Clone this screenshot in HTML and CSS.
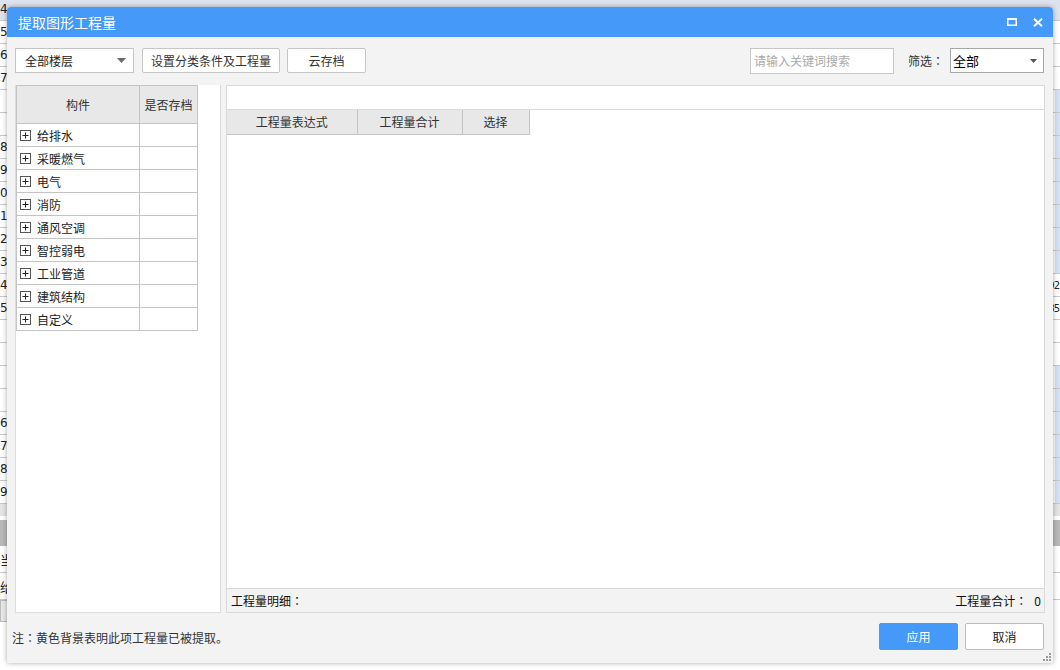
FILE: index.html
```html
<!DOCTYPE html>
<html lang="zh">
<head>
<meta charset="utf-8">
<title>提取图形工程量</title>
<link rel="stylesheet" href="styles.css">
</head>
<body>
<div class="sheet">
  <div class="srow top"><span class="num">4</span></div>
  <div class="srow"><span class="num">5</span></div>
  <div class="srow"><span class="num">6</span></div>
  <div class="srow"><span class="num">7</span></div>
  <div class="srow blue"><span class="num"></span></div>
  <div class="srow blue"><span class="num"></span></div>
  <div class="srow blue"><span class="num">8</span></div>
  <div class="srow blue"><span class="num">9</span></div>
  <div class="srow blue"><span class="num">0</span></div>
  <div class="srow blue"><span class="num">1</span></div>
  <div class="srow blue"><span class="num">2</span></div>
  <div class="srow blue"><span class="num">3</span></div>
  <div class="srow"><span class="num">4</span><span class="rt">92</span></div>
  <div class="srow"><span class="num">5</span><span class="rt">85</span></div>
  <div class="srow"><span class="num"></span></div>
  <div class="srow"><span class="num"></span></div>
  <div class="srow blue"><span class="num"></span></div>
  <div class="srow blue"><span class="num"></span></div>
  <div class="srow blue"><span class="num">6</span></div>
  <div class="srow blue"><span class="num">7</span></div>
  <div class="srow blue"><span class="num">8</span></div>
  <div class="srow blue"><span class="num">9</span></div>
  <div class="sgray"></div>
  <div class="srow tall"><span class="num">当</span></div>
  <div class="srow tall"><span class="num">给</span></div>
  <div class="sbox"></div>
</div>

<div class="dialog">
  <div class="titlebar">
    <span class="title">提取图形工程量</span>
    <div class="winbtns">
      <svg width="10" height="8" viewBox="0 0 10 8"><rect x="0.75" y="1" width="8.5" height="6.25" fill="none" stroke="#fff" stroke-width="1.5"/><rect x="0" y="0" width="10" height="2" fill="#fff"/></svg>
      <svg width="10" height="9" viewBox="0 0 10 9"><path d="M1 0.8L9 8.2M9 0.8L1 8.2" stroke="#fff" stroke-width="2"/></svg>
    </div>
  </div>

  <div class="toolbar">
    <div class="dropdown floor">
      <span>全部楼层</span>
      <svg class="caret" width="9" height="5" viewBox="0 0 9 5"><path d="M0 0h9L4.5 5z" fill="#6b6b6b"/></svg>
    </div>
    <button class="btn setup">设置分类条件及工程量</button>
    <button class="btn cloud">云存档</button>
    <div class="spacer"></div>
    <div class="search">请输入关键词搜索</div>
    <span class="filter-label">筛选<span class="p">：</span></span>
    <div class="dropdown filter">
      <span>全部</span>
      <svg class="caret small" width="7" height="4" viewBox="0 0 7 4"><path d="M0 0h7L3.5 4z" fill="#555"/></svg>
    </div>
  </div>

  <div class="main">
    <div class="leftpanel">
      <table class="tree">
        <colgroup><col class="c1"><col class="c2"></colgroup>
        <thead>
          <tr><th>构件</th><th>是否存档</th></tr>
        </thead>
        <tbody>
          <tr><td><span class="item"><svg class="plus" width="11" height="11" viewBox="0 0 11 11"><rect x="0.5" y="0.5" width="10" height="10" fill="#fff" stroke="#555"/><path d="M2.5 5.5h6M5.5 2.5v6" stroke="#222"/></svg>给排水</span></td><td></td></tr>
          <tr><td><span class="item"><svg class="plus" width="11" height="11" viewBox="0 0 11 11"><rect x="0.5" y="0.5" width="10" height="10" fill="#fff" stroke="#555"/><path d="M2.5 5.5h6M5.5 2.5v6" stroke="#222"/></svg>采暖燃气</span></td><td></td></tr>
          <tr><td><span class="item"><svg class="plus" width="11" height="11" viewBox="0 0 11 11"><rect x="0.5" y="0.5" width="10" height="10" fill="#fff" stroke="#555"/><path d="M2.5 5.5h6M5.5 2.5v6" stroke="#222"/></svg>电气</span></td><td></td></tr>
          <tr><td><span class="item"><svg class="plus" width="11" height="11" viewBox="0 0 11 11"><rect x="0.5" y="0.5" width="10" height="10" fill="#fff" stroke="#555"/><path d="M2.5 5.5h6M5.5 2.5v6" stroke="#222"/></svg>消防</span></td><td></td></tr>
          <tr><td><span class="item"><svg class="plus" width="11" height="11" viewBox="0 0 11 11"><rect x="0.5" y="0.5" width="10" height="10" fill="#fff" stroke="#555"/><path d="M2.5 5.5h6M5.5 2.5v6" stroke="#222"/></svg>通风空调</span></td><td></td></tr>
          <tr><td><span class="item"><svg class="plus" width="11" height="11" viewBox="0 0 11 11"><rect x="0.5" y="0.5" width="10" height="10" fill="#fff" stroke="#555"/><path d="M2.5 5.5h6M5.5 2.5v6" stroke="#222"/></svg>智控弱电</span></td><td></td></tr>
          <tr><td><span class="item"><svg class="plus" width="11" height="11" viewBox="0 0 11 11"><rect x="0.5" y="0.5" width="10" height="10" fill="#fff" stroke="#555"/><path d="M2.5 5.5h6M5.5 2.5v6" stroke="#222"/></svg>工业管道</span></td><td></td></tr>
          <tr><td><span class="item"><svg class="plus" width="11" height="11" viewBox="0 0 11 11"><rect x="0.5" y="0.5" width="10" height="10" fill="#fff" stroke="#555"/><path d="M2.5 5.5h6M5.5 2.5v6" stroke="#222"/></svg>建筑结构</span></td><td></td></tr>
          <tr><td><span class="item"><svg class="plus" width="11" height="11" viewBox="0 0 11 11"><rect x="0.5" y="0.5" width="10" height="10" fill="#fff" stroke="#555"/><path d="M2.5 5.5h6M5.5 2.5v6" stroke="#222"/></svg>自定义</span></td><td></td></tr>
        </tbody>
      </table>
    </div>

    <div class="rightpanel">
      <div class="topstrip"></div>
      <div class="grid-area">
        <table class="qty">
          <colgroup><col class="q1"><col class="q2"><col class="q3"></colgroup>
          <thead><tr><th>工程量表达式</th><th>工程量合计</th><th>选择</th></tr></thead>
        </table>
      </div>
      <div class="summary">
        <span>工程量明细<span class="p">：</span></span>
        <span>工程量合计<span class="p">：</span><span class="total">0</span></span>
      </div>
    </div>
  </div>

  <div class="footer">
    <span class="note">注<span class="p">：</span>黄色背景表明此项工程量已被提取。</span>
    <div class="actions">
      <button class="btn primary">应用</button>
      <button class="btn cancel">取消</button>
    </div>
  </div>

  <svg class="grip" width="9" height="9" viewBox="0 0 9 9"><g fill="#9a9a9a"><rect x="7" y="1" width="2" height="2"/><rect x="4" y="4" width="2" height="2"/><rect x="7" y="4" width="2" height="2"/><rect x="1" y="7" width="2" height="2"/><rect x="4" y="7" width="2" height="2"/><rect x="7" y="7" width="2" height="2"/></g></svg>
</div>
</body>
</html>
```

FILE: styles.css
```css
* { box-sizing: border-box; }

body {
  margin: 0;
  width: 1060px;
  height: 670px;
  position: relative;
  overflow: hidden;
  background: #fff;
  font-family: "Noto Sans CJK SC", "Noto Sans", sans-serif;
  font-size: 12px;
  color: #333;
  text-spacing-trim: space-all;
}

/* centred full-width punctuation */
.p {
  font-family: "Noto Sans CJK TC", "Noto Sans CJK SC", sans-serif;
  display: inline-block;
  width: 1em;
  text-align: center;
}

/* background spreadsheet */
.sheet {
  display: flex;
  flex-direction: column;
  margin-top: -2px;
}
.srow {
  height: 23px;
  flex: none;
  display: flex;
  align-items: center;
  justify-content: space-between;
  border-bottom: 1px solid #c9c9c9;
  font-family: "DejaVu Sans", sans-serif;
  font-size: 12px;
  color: #222;
  background: #fff;
}
.srow.top { background: #dde3ee; }
.srow.blue { background: linear-gradient(to right, #fff 0, #fff 1055px, #d5e0f3 1055px); }
.srow.tall { height: 27px; font-family: "Noto Sans CJK SC", sans-serif; font-size: 13px; }
.num { width: 12px; }
.rt { font-size: 10px; letter-spacing: -1px; padding-right: 1px; }
.sgray {
  height: 42px;
  flex: none;
  background: linear-gradient(to bottom, #e4e4e4 0, #e4e4e4 12px, #fff 12px, #fff 16px, #b8b8b8 16px);
}
.sbox {
  height: 22px;
  width: 30px;
  flex: none;
  background: #e8e8e8;
  border: 1px solid #bbb;
}

/* dialog */
.dialog {
  position: absolute;
  left: 7px;
  top: 7px;
  width: 1046px;
  height: 656px;
  background: #f3f3f3;
  border-radius: 4px 4px 2px 2px;
  box-shadow: 0 0 5px rgba(0, 0, 0, 0.35);
  display: flex;
  flex-direction: column;
  overflow: hidden;
}

.titlebar {
  height: 30px;
  flex: none;
  background: #4499f9;
  color: #fff;
  display: flex;
  align-items: center;
  justify-content: space-between;
  padding: 0 10px 0 11px;
}
.title { font-size: 14px; }
.winbtns { display: flex; align-items: center; gap: 16px; }

.toolbar {
  flex: none;
  display: flex;
  align-items: center;
  height: 36px;
  padding: 11px 9px 0 8px;
}
.spacer { flex: 1; }

.dropdown {
  height: 25px;
  background: #fff;
  border: 1px solid #c4c4c4;
  display: flex;
  align-items: center;
  justify-content: space-between;
  color: #222;
}
.dropdown.floor { width: 119px; padding: 0 7px 0 9px; }
.dropdown.filter { width: 94px; padding: 0 6px 0 2px; border-color: #a8a8a8; font-size: 13px; color: #000; }

.btn {
  font-family: inherit;
  font-size: 12px;
  color: #333;
  background: #fff;
  border: 1px solid #c6c6c6;
  border-radius: 2px;
  height: 25px;
  padding: 0;
}
.btn.setup { width: 138px; margin-left: 8px; }
.btn.cloud { width: 79px; margin-left: 7px; }

.search {
  width: 144px;
  height: 26px;
  background: #fff;
  border: 1px solid #c6c6c6;
  color: #a9a9a9;
  display: flex;
  align-items: center;
  padding-left: 3px;
}
.filter-label { margin-left: 14px; width: 42px; color: #333; white-space: nowrap; }

.main {
  flex: none;
  height: 528px;
  margin-top: 12px;
  padding: 0 8px;
  display: flex;
  gap: 5px;
}

.leftpanel {
  width: 206px;
  background: #fff;
  border: 1px solid #dcdcdc;
  border-top: none;
}
.tree {
  border-collapse: collapse;
  table-layout: fixed;
  width: 181px;
}
.tree .c1 { width: 123px; }
.tree .c2 { width: 58px; }
.tree th {
  height: 38px;
  background: #e8e8e8;
  border: 1px solid #c4c4c4;
  font-weight: normal;
  color: #333;
  padding: 0;
}
.tree td {
  height: 23px;
  border: 1px solid #c4c4c4;
  padding: 0 0 0 3px;
  color: #222;
}
.item { display: flex; align-items: center; gap: 6px; }
.plus { flex: none; }

.rightpanel {
  flex: 1;
  background: #fff;
  border: 1px solid #d9d9d9;
  display: flex;
  flex-direction: column;
}
.topstrip {
  height: 24px;
  border-bottom: 1px solid #dadada;
  flex: none;
}
.grid-area { flex: 1; }
.qty {
  border-collapse: collapse;
  table-layout: fixed;
  width: 302px;
}
.qty .q1 { width: 130px; }
.qty .q2 { width: 105px; }
.qty .q3 { width: 67px; }
.qty th {
  height: 24px;
  background: #e8e8e8;
  border: 1px solid #c4c4c4;
  border-top: none;
  border-left: none;
  font-weight: normal;
  color: #333;
  padding: 0;
}
.summary {
  flex: none;
  height: 24px;
  background: #f3f3f3;
  border-top: 1px solid #d9d9d9;
  display: flex;
  align-items: center;
  justify-content: space-between;
  padding: 0 3px 0 4px;
  color: #111;
}
.total { margin-left: 7px; }

.footer {
  flex: 1;
  display: flex;
  align-items: flex-start;
  justify-content: space-between;
  padding: 10px 9px 0 5px;
}
.note { margin-top: 6px; color: #333; }
.actions { display: flex; gap: 7px; }
.btn.primary {
  width: 79px;
  height: 27px;
  background: #4499f9;
  border-color: #4499f9;
  color: #fff;
}
.btn.cancel {
  width: 79px;
  height: 27px;
  border-color: #bdbdbd;
  color: #222;
}

.grip {
  position: absolute;
  right: 2px;
  bottom: 2px;
}
```
